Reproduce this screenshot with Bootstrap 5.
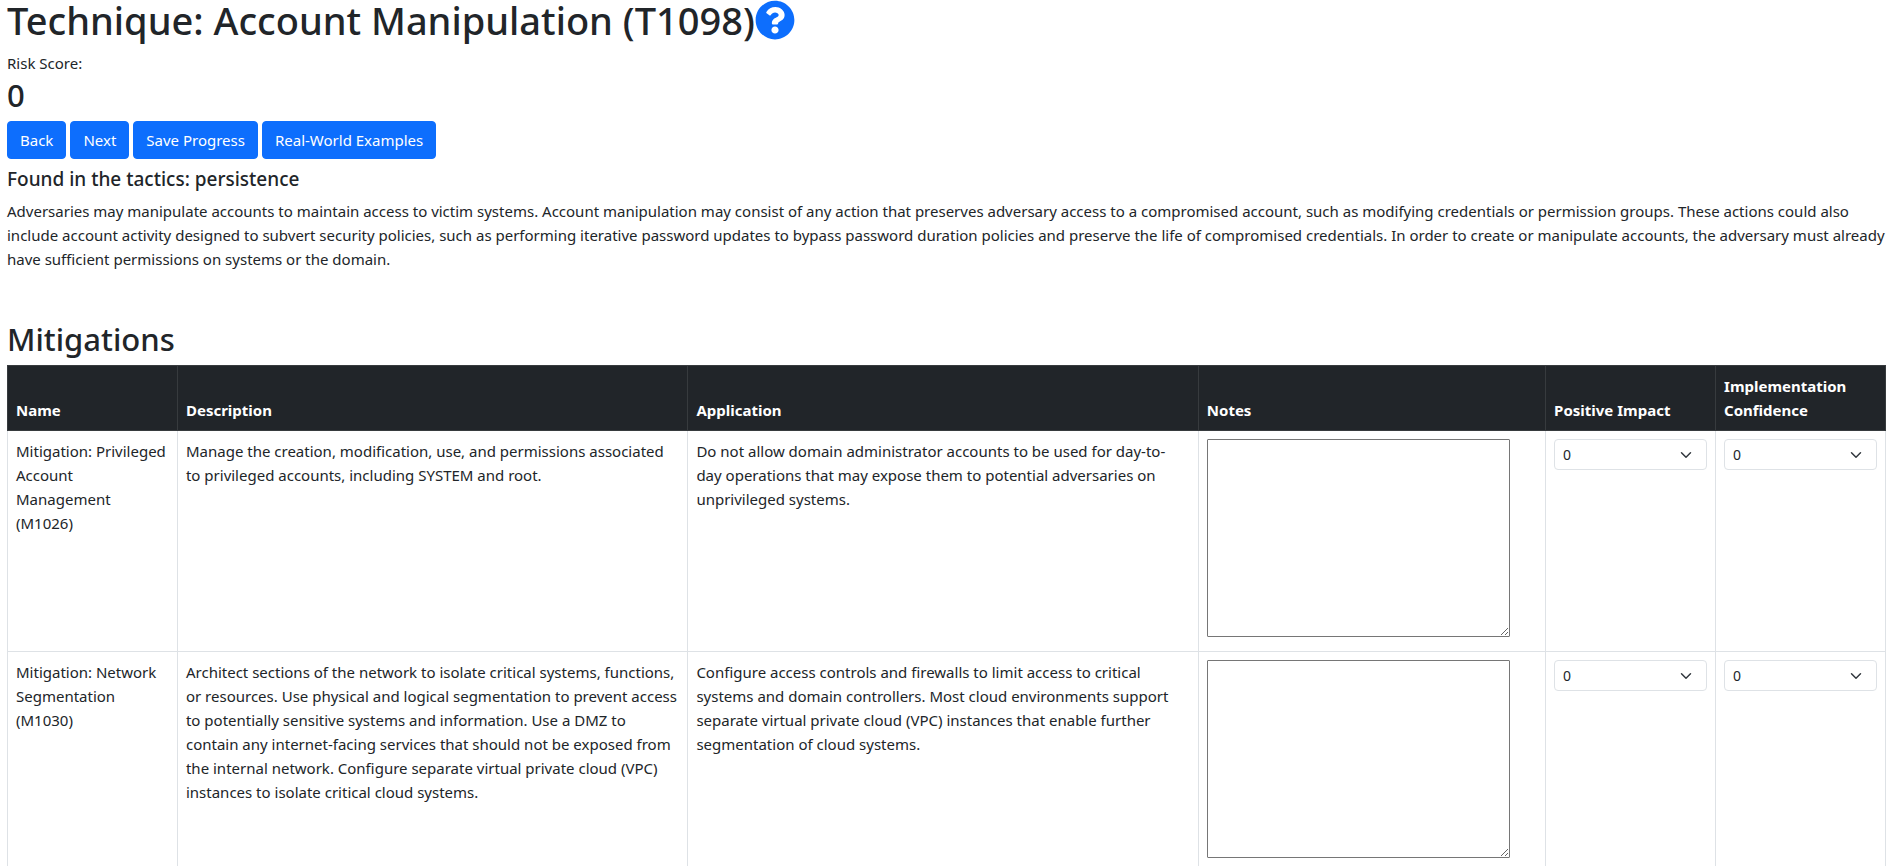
<!DOCTYPE html>
<html lang="en">
<head>
<meta charset="utf-8">
<meta name="viewport" content="width=device-width, initial-scale=1">
<title>Technique: Account Manipulation (T1098)</title>
<link href="https://cdn.jsdelivr.net/npm/bootstrap@5.3.0/dist/css/bootstrap.min.css" rel="stylesheet">
<style>
  body { font-family: "Segoe UI", "Noto Sans", "Open Sans", sans-serif; font-size: 15px; line-height: 24px; }
  .page { padding: 0 5px 0 7px; }
  h1 { font-size: 38px; line-height: 40px; margin-bottom: 11px; }
  h2 { font-size: 31px; line-height: 40px; margin-bottom: 6px; }
  .tactics { font-size: 19px; line-height: 24px; }
  .btn { --bs-btn-font-size: 15px; --bs-btn-line-height: 24px; --bs-btn-border-radius: 4px; }
  .help-icon { width: 40px; height: 40px; }
  .mitigations { table-layout: fixed; }
  .col-narrow { width: 9.05%; }
  .col-wide { width: 27.18%; }
  .notes-box { width: 303px; max-width: 100%; height: 198px; border: 1px solid #767676; border-radius: 1px; margin-bottom: 6px; }
  .form-select-sm { font-size: 14px; line-height: 21px; }
</style>
</head>
<body>
<main class="page">
  <h1 class="d-flex align-items-start">Technique: Account Manipulation (T1098)<a href="#help" class="d-flex" aria-label="Help"><svg class="help-icon" viewBox="0 0 512 512" fill="currentColor" aria-hidden="true"><path d="M504 256c0 136.997-111.043 248-248 248S8 392.997 8 256C8 119.083 119.043 8 256 8s248 111.083 248 248zM262.655 90c-54.497 0-89.255 22.957-116.549 63.758-3.536 5.286-2.353 12.415 2.715 16.258l34.699 26.31c5.205 3.947 12.621 3.008 16.665-2.122 17.864-22.658 30.113-35.797 57.303-35.797 20.429 0 45.698 13.148 45.698 32.958 0 14.976-12.363 22.667-32.534 33.976C247.128 238.528 216 254.941 216 296v4c0 6.627 5.373 12 12 12h56c6.627 0 12-5.373 12-12v-1.333c0-28.462 83.186-29.647 83.186-106.667 0-58.002-60.165-102-116.531-102zM256 338c-25.365 0-46 20.635-46 46 0 25.364 20.635 46 46 46s46-20.636 46-46c0-25.364-20.635-46-46-46z"/></svg></a></h1>
  <div>Risk Score:</div>
  <h2>0</h2>
  <div class="d-flex flex-wrap gap-1 mb-2">
    <button type="button" class="btn btn-primary">Back</button>
    <button type="button" class="btn btn-primary">Next</button>
    <button type="button" class="btn btn-primary">Save Progress</button>
    <button type="button" class="btn btn-primary">Real-World Examples</button>
  </div>
  <h5 class="tactics">Found in the tactics: persistence</h5>
  <p class="mb-5">Adversaries may manipulate accounts to maintain access to victim systems. Account manipulation may consist of any action that preserves adversary access to a compromised account, such as modifying credentials or permission groups. These actions could also include account activity designed to subvert security policies, such as performing iterative password updates to bypass password duration policies and preserve the life of compromised credentials. In order to create or manipulate accounts, the adversary must already have sufficient permissions on systems or the domain.</p>
  <h2>Mitigations</h2>
  <table class="table table-bordered mitigations mb-0">
    <colgroup>
      <col class="col-narrow"><col class="col-wide"><col class="col-wide"><col><col class="col-narrow"><col class="col-narrow">
    </colgroup>
    <thead class="table-dark">
      <tr>
        <th scope="col">Name</th>
        <th scope="col">Description</th>
        <th scope="col">Application</th>
        <th scope="col">Notes</th>
        <th scope="col">Positive Impact</th>
        <th scope="col">Implementation Confidence</th>
      </tr>
    </thead>
    <tbody>
      <tr>
        <td>Mitigation: Privileged Account Management (M1026)</td>
        <td>Manage the creation, modification, use, and permissions associated to privileged accounts, including SYSTEM and root.</td>
        <td>Do not allow domain administrator accounts to be used for day-to-day operations that may expose them to potential adversaries on unprivileged systems.</td>
        <td><textarea class="notes-box d-block" aria-label="Notes for M1026"></textarea></td>
        <td><select class="form-select form-select-sm" aria-label="Positive impact of M1026"><option>0</option><option>1</option><option>2</option><option>3</option></select></td>
        <td><select class="form-select form-select-sm" aria-label="Implementation confidence of M1026"><option>0</option><option>1</option><option>2</option><option>3</option></select></td>
      </tr>
      <tr>
        <td>Mitigation: Network Segmentation (M1030)</td>
        <td>Architect sections of the network to isolate critical systems, functions, or resources. Use physical and logical segmentation to prevent access to potentially sensitive systems and information. Use a DMZ to contain any internet-facing services that should not be exposed from the internal network. Configure separate virtual private cloud (VPC) instances to isolate critical cloud systems.</td>
        <td>Configure access controls and firewalls to limit access to critical systems and domain controllers. Most cloud environments support separate virtual private cloud (VPC) instances that enable further segmentation of cloud systems.</td>
        <td><textarea class="notes-box d-block" aria-label="Notes for M1030"></textarea></td>
        <td><select class="form-select form-select-sm" aria-label="Positive impact of M1030"><option>0</option><option>1</option><option>2</option><option>3</option></select></td>
        <td><select class="form-select form-select-sm" aria-label="Implementation confidence of M1030"><option>0</option><option>1</option><option>2</option><option>3</option></select></td>
      </tr>
    </tbody>
  </table>
</main>
<script src="https://cdn.jsdelivr.net/npm/bootstrap@5.3.0/dist/js/bootstrap.bundle.min.js"></script>
</body>
</html>
